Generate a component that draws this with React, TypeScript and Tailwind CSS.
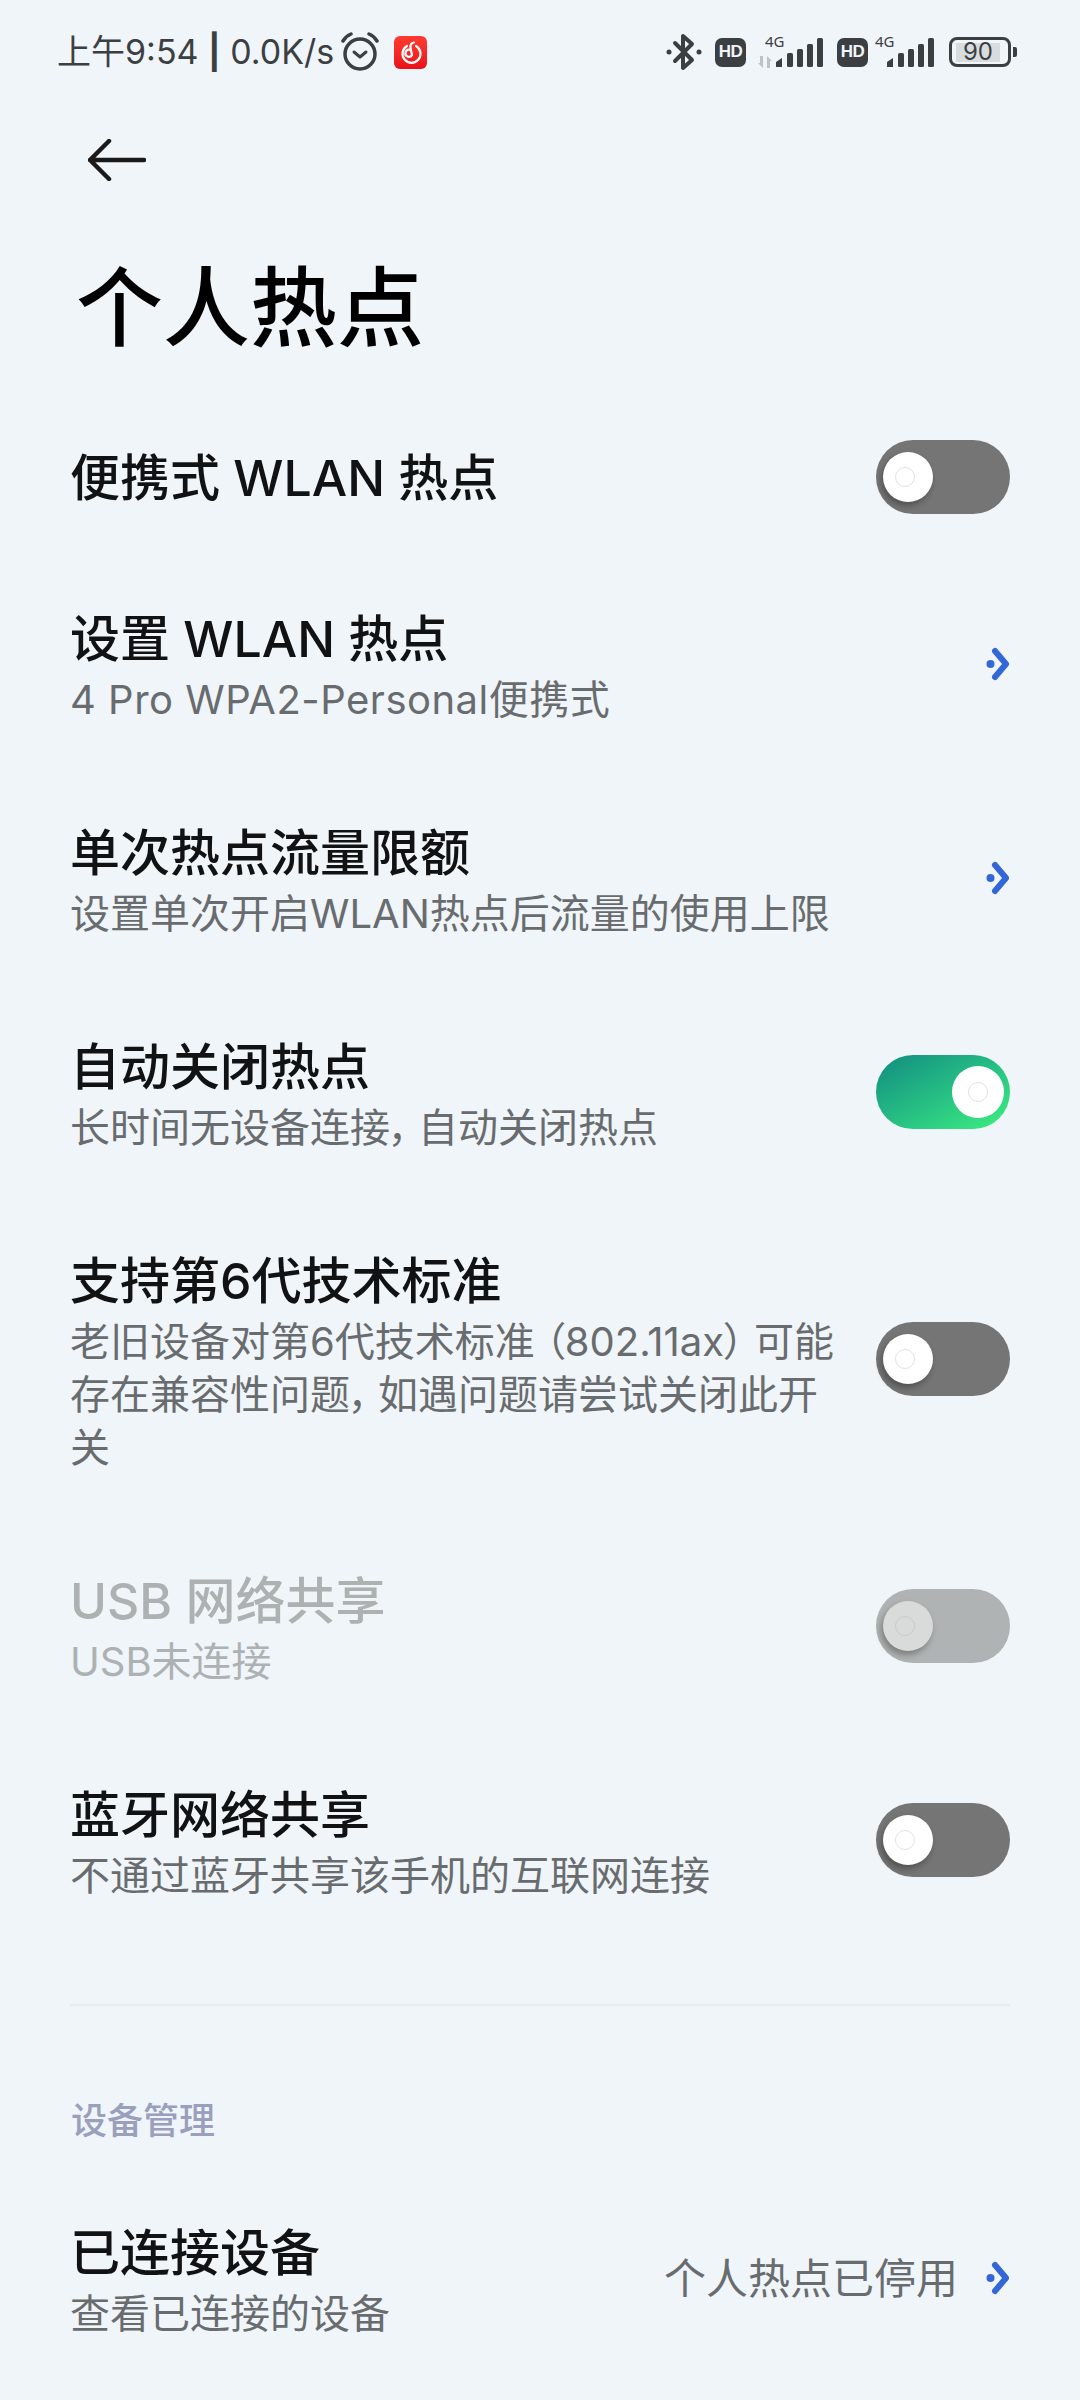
import React from 'react';

const sans = "font-['Inter','Noto_Sans_CJK_SC',sans-serif]";

function Comma() {
  return <span className="mr-[8px] [font-feature-settings:'palt']">，</span>;
}

function Chevron() {
  return (
    <svg width="24" height="34" viewBox="0 0 24 34" className="shrink-0">
      <circle cx="4.5" cy="17" r="4" fill="#3366d6" />
      <path d="M9 4 L20 17 L9 30" fill="none" stroke="#3366d6" strokeWidth="6" strokeLinecap="round" strokeLinejoin="round" />
    </svg>
  );
}

function Toggle({ on, disabled }: { on?: boolean; disabled?: boolean }) {
  const track = on
    ? 'bg-gradient-to-br from-[#128c80] to-[#3df07e]'
    : disabled
      ? 'bg-[#b0b3b3]'
      : 'bg-[#757575]';
  const knob = disabled ? 'bg-[#d9dbda]' : 'bg-white';
  return (
    <div className={`flex h-[74px] w-[134px] shrink-0 items-center rounded-full ${track} ${on ? 'justify-end pr-[6px]' : 'justify-start pl-[7px]'}`}>
      <div className={`flex items-center justify-center rounded-full ${knob} ${on ? 'h-[52px] w-[52px]' : 'h-[50px] w-[50px] shadow-[-2px_4px_6px_rgba(0,0,0,0.3)]'}`}>
        <div className={`h-[20px] w-[20px] rounded-full border ${disabled ? 'border-[#c9cbcb]' : 'border-[#e2e2e2]'} ${on ? '' : '-translate-x-[3px]'}`} />
      </div>
    </div>
  );
}

function Row({ title, sub, right, disabled, className, subClass }: { title: string; sub?: React.ReactNode; right: React.ReactNode; disabled?: boolean; className: string; subClass?: string }) {
  return (
    <div className={`flex items-center justify-between px-[70px] ${className}`}>
      <div className="max-w-[775px] pt-[3px]">
        <div className={`text-[50px] leading-[68px] font-medium ${disabled ? 'text-[#aeb1b2]' : 'text-[#111213]'}`}>{title}</div>
        {sub && <div className={`text-[40px] leading-[53px] ${disabled ? 'text-[#aeb1b2]' : 'text-[#696c6e]'} ${subClass ?? ''}`}>{sub}</div>}
      </div>
      {right}
    </div>
  );
}

function Bars() {
  return (
    <svg width="48" height="30" viewBox="0 0 48 30" fill="#3c3f42">
      <path d="M0 24 L6 20 V29 H0Z" />
      <rect x="11" y="15" width="6" height="14" rx="1.5" />
      <rect x="21" y="11" width="6" height="18" rx="1.5" />
      <rect x="31" y="6" width="6" height="23" rx="1.5" />
      <rect x="41" y="0" width="6" height="29" rx="1.5" />
    </svg>
  );
}

function Hd() {
  return (
    <span className="flex h-[29px] w-[31px] items-center justify-center rounded-[7px] bg-[#3c3f42] font-['Liberation_Sans',sans-serif] text-[17px] font-bold tracking-[-0.5px] text-[#eff5f9]">HD</span>
  );
}

function StatusBar() {
  return (
    <div className="flex h-[104px] items-center justify-between pl-[57px] pr-[63px] text-[#3c3f42]">
      <div className="flex items-center">
        <span className="w-[283px] text-[34px] leading-none whitespace-nowrap">上午9:54 <span className="font-bold">|</span> 0.0K/s</span>
        <svg width="40" height="40" viewBox="0 0 40 40" fill="none" stroke="#3c3f42">
          <circle cx="20" cy="22" r="15" strokeWidth="3.5" />
          <path d="M14 20 L20 25 L26 20" strokeWidth="3" strokeLinecap="round" strokeLinejoin="round" />
          <path d="M3 9 Q6 4 11 2 M37 9 Q34 4 29 2" strokeWidth="3.5" strokeLinecap="round" />
        </svg>
        <div className="ml-[14px] flex h-[33px] w-[33px] items-center justify-center rounded-[6px] bg-gradient-to-b from-[#ff3b30] to-[#e8101a]">
          <svg width="24" height="24" viewBox="0 0 24 24" fill="none" stroke="#fff" strokeWidth="2.2" strokeLinecap="round">
            <path d="M8 6 A9 9 0 1 0 17 6" />
            <path d="M15 2.5 Q11 3 11.5 8 L13 15 A3.5 3.5 0 1 1 11 10" />
          </svg>
        </div>
      </div>
      <div className="flex items-center">
        <svg width="36" height="38" viewBox="0 0 36 38" fill="none" stroke="#3c3f42" strokeWidth="4" strokeLinejoin="round" strokeLinecap="round">
          <path d="M9 10 L26 27 L17 35 V3 L26 11 L9 28" />
          <circle cx="3" cy="19" r="2.5" fill="#3c3f42" stroke="none" />
          <circle cx="33" cy="19" r="2.5" fill="#3c3f42" stroke="none" />
        </svg>
        <div className="ml-[13px]"><Hd /></div>
        <div className="relative ml-[12px] h-[38px] w-[66px]">
          <span className="absolute left-[7px] top-[-2px] font-['Noto_Sans',sans-serif] text-[15px] leading-[20px]">4G</span>
          <svg width="16" height="12" viewBox="0 0 16 12" fill="#bfc2c4" className="absolute left-0 top-[23px]">
            <path d="M2 0 H5 V12 L0 7 H2Z M9 0 L14 5 H12 V12 H9Z" />
          </svg>
          <div className="absolute right-0 top-[5px]"><Bars /></div>
        </div>
        <div className="ml-[13px]"><Hd /></div>
        <div className="relative ml-[7px] h-[38px] w-[60px]">
          <span className="absolute left-0 top-[-2px] font-['Noto_Sans',sans-serif] text-[15px] leading-[20px]">4G</span>
          <div className="absolute right-0 top-[5px]"><Bars /></div>
        </div>
        <div className="ml-[14px] flex h-[30px] w-[62px] items-center rounded-[8px] border-[3px] border-[#3c3f42] pl-[4px]">
          <div className="flex h-[19px] w-[44px] items-center justify-center bg-[#d9dcde] text-[24px] leading-none">90</div>
        </div>
        <div className="ml-[2px] h-[10px] w-[4px] rounded-r-[2px] bg-[#3c3f42]" />
      </div>
    </div>
  );
}

export default function App() {
  return (
    <div className={`h-[2400px] w-[1080px] overflow-hidden bg-[#eff5f9] ${sans}`}>
      <StatusBar />
      <div className="flex h-[112px] items-center pl-[88px]">
        <svg width="58" height="42" viewBox="0 0 58 42" fill="none" stroke="#1a1a1a" strokeWidth="4.5" strokeLinecap="round" strokeLinejoin="round">
          <path d="M2 21 H56 M21 2 L2 21 L21 40" />
        </svg>
      </div>
      <h1 className="pl-[76px] pt-[6px] text-[87px] leading-[174px] font-medium text-black">个人热点</h1>
      <Row title="便携式 WLAN 热点" right={<Toggle />} className="h-[161px]" />
      <Row title="设置 WLAN 热点" sub="4 Pro WPA2-Personal便携式" subClass="tracking-[0.5px]" right={<Chevron />} className="h-[214px]" />
      <Row title="单次热点流量限额" sub="设置单次开启WLAN热点后流量的使用上限" right={<Chevron />} className="h-[214px]" />
      <Row title="自动关闭热点" sub={<>长时间无设备连接<Comma />自动关闭热点</>} right={<Toggle on />} className="h-[214px]" />
      <Row
        title="支持第6代技术标准"
        sub={<>老旧设备对第6代技术标准<span className="ml-[10px] [font-feature-settings:'palt']">（</span>802.11ax<span className="mr-[10px] [font-feature-settings:'palt']">）</span>可能<br />存在兼容性问题<Comma />如遇问题请尝试关闭此开<br />关</>}
        right={<Toggle />}
        className="h-[320px]"
      />
      <Row title="USB 网络共享" sub="USB未连接" disabled right={<Toggle disabled />} className="h-[214px]" />
      <Row title="蓝牙网络共享" sub="不通过蓝牙共享该手机的互联网连接" right={<Toggle />} className="h-[214px]" />
      <div className="mx-[70px] mt-[57px] h-[2px] bg-[#e6ebee]" />
      <div className="pl-[71px] pt-[90px] text-[36px] leading-[50px] font-medium text-[#9a9fbe]">设备管理</div>
      <Row title="已连接设备" sub="查看已连接的设备" className="mt-[25px] h-[214px]" right={
        <div className="flex items-center">
          <span className="text-[42px] whitespace-nowrap text-[#696c6e]">个人热点已停用</span>
          <span className="ml-[28px]"><Chevron /></span>
        </div>
      } />
    </div>
  );
}
